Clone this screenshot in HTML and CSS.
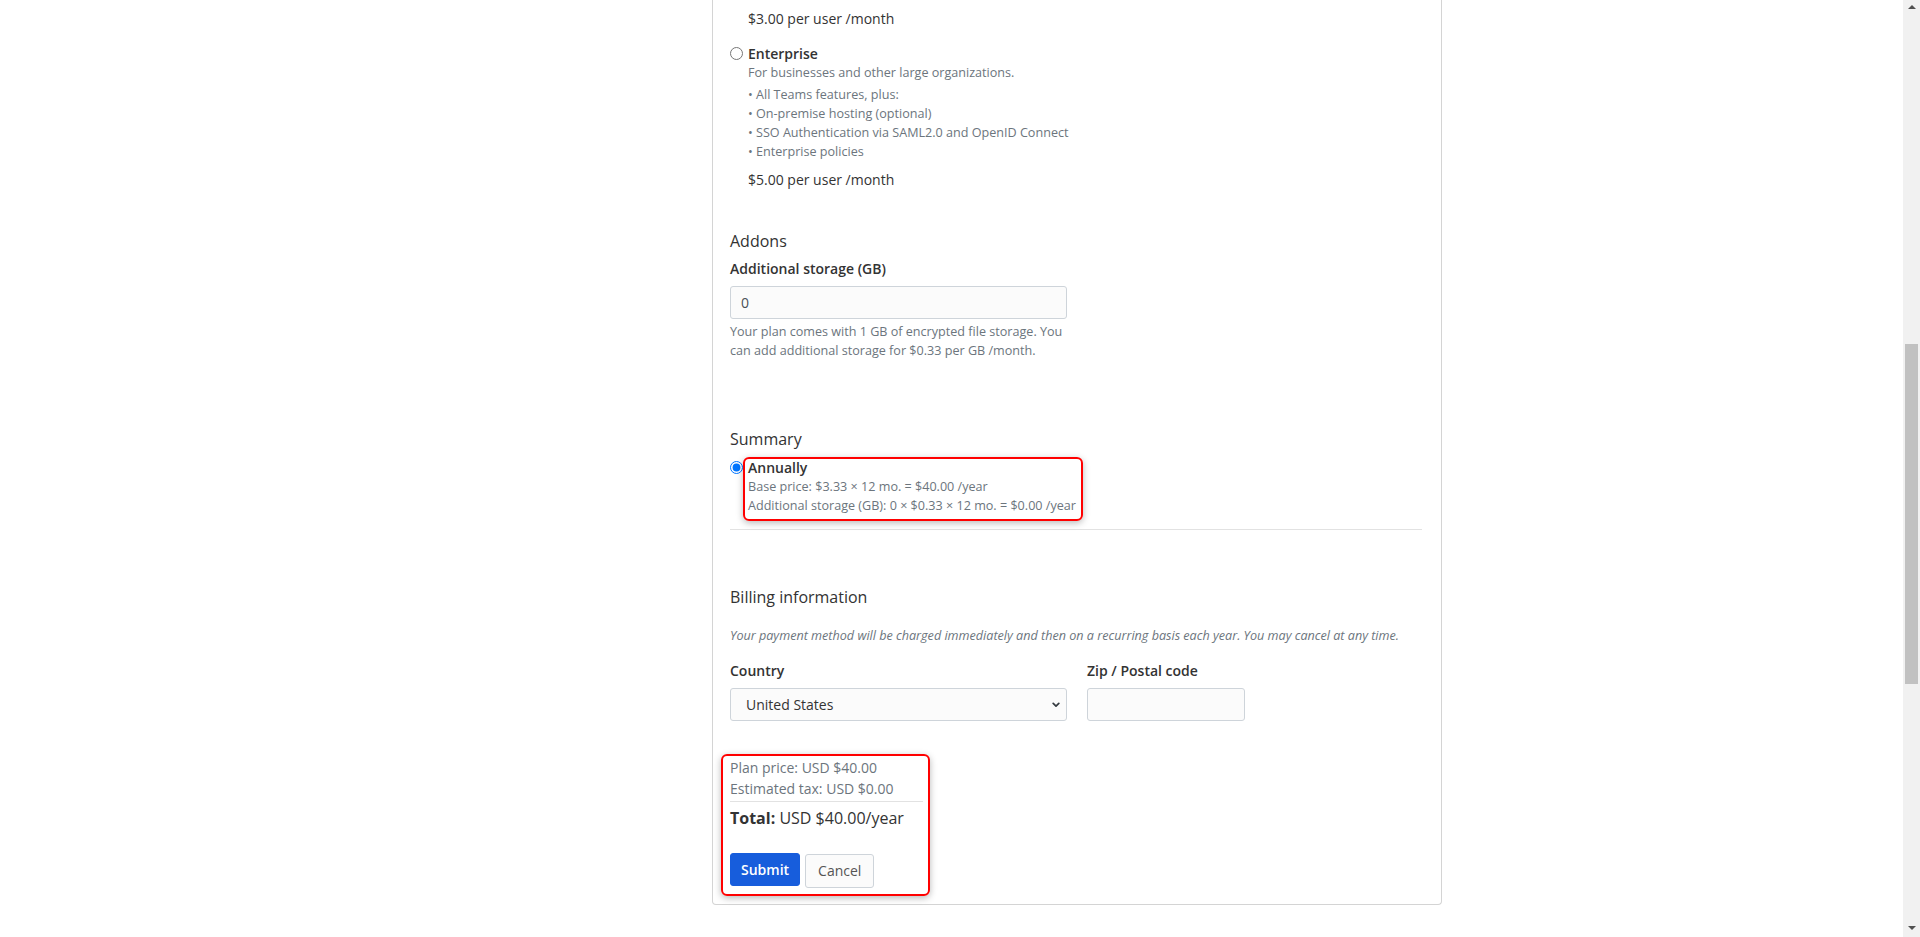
FILE: index.html
```html
<!DOCTYPE html>
<html lang="en">
<head>
<meta charset="utf-8">
<title>Upgrade organization</title>
<link rel="stylesheet" href="styles.css">
</head>
<body>
<div class="viewport">
  <main class="page">
    <div class="layout">
      <div class="side"></div>
      <section class="card">
        <p class="price indent">$3.00 per user /month</p>

        <div class="plan">
          <input type="radio" name="plan" class="radio">
          <div class="plan-body">
            <div class="plan-name">Enterprise</div>
            <p class="small muted desc">For businesses and other large organizations.</p>
            <ul class="features small muted">
              <li>• All Teams features, plus:</li>
              <li>• On-premise hosting (optional)</li>
              <li>• SSO Authentication via SAML2.0 and OpenID Connect</li>
              <li>• Enterprise policies</li>
            </ul>
            <p class="price plan-price">$5.00 per user /month</p>
          </div>
        </div>

        <h2 class="section-title addons-title">Addons</h2>
        <div class="field half">
          <label class="label" for="storage">Additional storage (GB)</label>
          <input class="input" id="storage" type="text" value="0">
          <p class="help small muted">Your plan comes with 1 GB of encrypted file storage. You can add additional storage for $0.33 per GB /month.</p>
        </div>

        <h2 class="section-title summary-title">Summary</h2>
        <div class="plan cycle">
          <input type="radio" name="cycle" class="radio" checked>
          <div class="hl hl-cycle">
            <div class="plan-name">Annually</div>
            <div class="small muted">Base price: $3.33 × 12 mo. = $40.00 /year</div>
            <div class="small muted">Additional storage (GB): 0 × $0.33 × 12 mo. = $0.00 /year</div>
          </div>
        </div>
        <hr class="rule">

        <h2 class="section-title billing-title">Billing information</h2>
        <p class="small muted note">Your payment method will be charged immediately and then on a recurring basis each year. You may cancel at any time.</p>
        <div class="row">
          <div class="field col-country">
            <label class="label" for="country">Country</label>
            <div class="select-wrap">
              <select class="input select" id="country"><option>United States</option></select>
              <svg class="chev" width="8" height="6" viewBox="0 0 8 6"><path d="M1.2 1.4 L4 4.2 L6.8 1.4" fill="none" stroke="#343a40" stroke-width="1.7" stroke-linecap="round" stroke-linejoin="round"/></svg>
            </div>
          </div>
          <div class="field col-zip">
            <label class="label" for="zip">Zip / Postal code</label>
            <input class="input" id="zip" type="text">
          </div>
        </div>

        <div class="hl totals">
          <div class="muted line">Plan price: USD $40.00</div>
          <div class="muted line">Estimated tax: USD $0.00</div>
          <hr class="rule thin">
          <p class="total"><strong>Total:</strong> USD $40.00/year</p>
          <div class="actions">
            <button class="btn primary" type="button">Submit</button>
            <button class="btn secondary" type="button">Cancel</button>
          </div>
        </div>
      </section>
    </div>
  </main>
  <div class="scrollbar" aria-hidden="true">
    <span class="sb-arrow sb-up"></span>
    <span class="sb-thumb"></span>
    <span class="sb-arrow sb-down"></span>
  </div>
</div>
</body>
</html>
```
FILE: styles.css
```css
* { box-sizing: border-box; }
html, body { margin: 0; height: 100%; }
body {
  font-family: "Open Sans", "Liberation Sans", sans-serif;
  font-size: 14px;
  color: #333;
  background: #fff;
  overflow: hidden;
}
.viewport { display: flex; height: 937px; }
.page { flex: 1; min-width: 0; }
.layout { display: grid; grid-template-columns: 712px 730px 1fr; }

.card {
  border: 1px solid #d4d4d4;
  border-top: 0;
  border-radius: 0 0 4px 4px;
  padding: 7.5px 19px 16px 17px;
}

p { margin: 0; }
.price { line-height: 21px; }
.indent { margin-left: 18px; }

.plan { display: flex; align-items: flex-start; gap: 5px; margin-top: 15px; }
.radio { margin: 3px 0 0; width: 13px; height: 13px; flex: none; }
.plan-name { font-weight: 600; line-height: 19px; }
.small { font-size: 12.6px; line-height: 19px; }
.muted { color: #6c757d; }
.desc { margin-bottom: 3px; }
.features { list-style: none; margin: 0; padding: 0; line-height: 19.3px; }
.plan-price { margin-top: 7px; }

.section-title { font-size: 16px; font-weight: 400; line-height: 19.2px; margin: 0; color: #333; }
.addons-title { margin-top: 42.6px; margin-bottom: 7px; }
.label { display: block; font-weight: 600; line-height: 21px; margin-bottom: 7px; }
.input {
  display: block;
  width: 100%;
  height: 33px;
  border: 1px solid #ced4da;
  border-radius: 3px;
  background: #fbfbfb;
  font: inherit;
  color: #495057;
  padding: 0 10px;
}
.half { width: 337px; }
.help { margin-top: 3px; }

.summary-title { margin-top: 70px; }
.cycle { margin-top: 8.5px; }
.rule { border: 0; border-top: 1px solid #e2e2e2; margin: 14px 0 0; height: 0; }

.billing-title { margin-top: 57.5px; }
.note { margin-top: 19px; font-style: italic; }
.row { display: flex; gap: 20px; margin-top: 15px; }
.col-country { width: 337px; }
.col-zip { width: 158px; }
.select-wrap { position: relative; }
.select { appearance: none; -webkit-appearance: none; padding-left: 15px; color: #333; }
.chev { position: absolute; right: 7px; top: 14px; pointer-events: none; }

.hl { position: relative; }
.hl::after {
  content: "";
  position: absolute;
  border: 2px solid #f00;
  border-radius: 6px;
  box-shadow: 0 2px 7px rgba(0, 0, 0, 0.28);
  pointer-events: none;
}
.hl-cycle::after { top: -1px; left: -5px; right: -7px; bottom: -6px; }

.totals { margin-top: 36.5px; width: 193px; }
.totals::after { top: -3px; left: -9px; right: -7px; bottom: -8px; }
.line { line-height: 21px; }
.rule.thin { margin: 2px 0 0; }
.total { font-size: 16px; line-height: 19.2px; margin-top: 7px; }
.total strong { font-weight: 700; }
.actions { display: flex; gap: 5px; margin-top: 24.4px; }
.btn {
  height: 33px;
  font: inherit;
  border-radius: 3px;
  padding: 0 10px;
  cursor: pointer;
}
.primary { background: #175ddc; border: 1px solid #175ddc; color: #fff; font-weight: 600; }
.secondary { background: #fbfbfb; border: 1px solid #ced4da; color: #555; margin-top: 1px; height: 34px; padding: 0 12px; }

.scrollbar {
  width: 17px;
  flex: none;
  background: #f1f1f1;
  display: flex;
  flex-direction: column;
  align-items: center;
}
.sb-arrow { width: 0; height: 0; border-left: 4px solid transparent; border-right: 4px solid transparent; }
.sb-up { border-bottom: 4px solid #505050; margin-top: 5px; }
.sb-down { border-top: 4px solid #505050; margin-top: auto; margin-bottom: 7px; }
.sb-thumb { width: 13px; height: 340px; background: #c1c1c1; margin-top: 335px; }
```
